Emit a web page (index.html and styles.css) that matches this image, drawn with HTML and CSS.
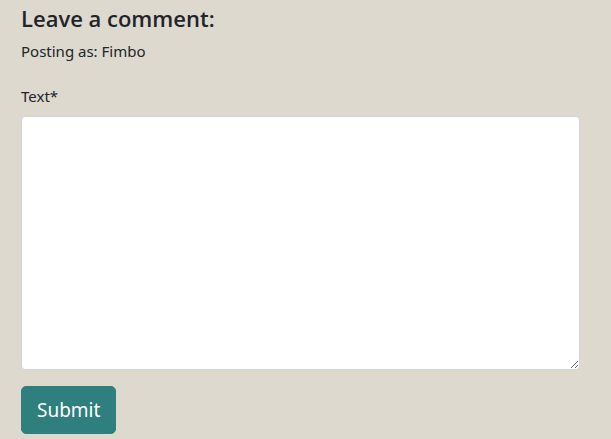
FILE: index.html
```html
<!DOCTYPE html>
<html lang="en">
<head>
<meta charset="utf-8">
<title>Leave a comment</title>
<link rel="stylesheet" href="styles.css">
</head>
<body>
<form class="comment-form">
  <h5 class="comment-title">Leave a comment:</h5>
  <p class="posting-as">Posting as: Fimbo</p>
  <div class="form-group">
    <label class="form-label" for="text">Text*</label>
    <textarea id="text" class="form-control"></textarea>
  </div>
  <button type="submit" class="btn-submit">Submit</button>
</form>
</body>
</html>
```

FILE: styles.css
```css
html, body {
  margin: 0;
  padding: 0;
}
body {
  background: #ddd9cf;
  color: #212529;
  font-family: "Noto Sans", "Open Sans", sans-serif;
  font-size: 15px;
  line-height: 1.5;
}
.comment-form {
  padding: 4px 31px 0 21px;
  display: flex;
  flex-direction: column;
  align-items: flex-start;
}
.comment-title {
  margin: 0 0 8px;
  font-family: "Open Sans", "Noto Sans", sans-serif;
  font-size: 22px;
  font-weight: 600;
  line-height: 28px;
}
.posting-as {
  margin: 0 0 22px;
  line-height: 23px;
}
.form-group {
  display: flex;
  flex-direction: column;
  align-self: stretch;
  margin-bottom: 16px;
}
.form-label {
  margin-bottom: 8px;
  line-height: 23px;
}
.form-control {
  box-sizing: border-box;
  height: 254px;
  width: 100%;
  margin: 0;
  background: #fff;
  border: 1px solid #ced4da;
  border-radius: 4px;
  resize: vertical;
  font: inherit;
}
.btn-submit {
  box-sizing: border-box;
  height: 48px;
  padding: 0 15px;
  background: #2e7f7d;
  color: #fff;
  border: 1px solid #2e7f7d;
  border-radius: 5px;
  font-family: inherit;
  font-size: 19px;
  cursor: pointer;
}
```
